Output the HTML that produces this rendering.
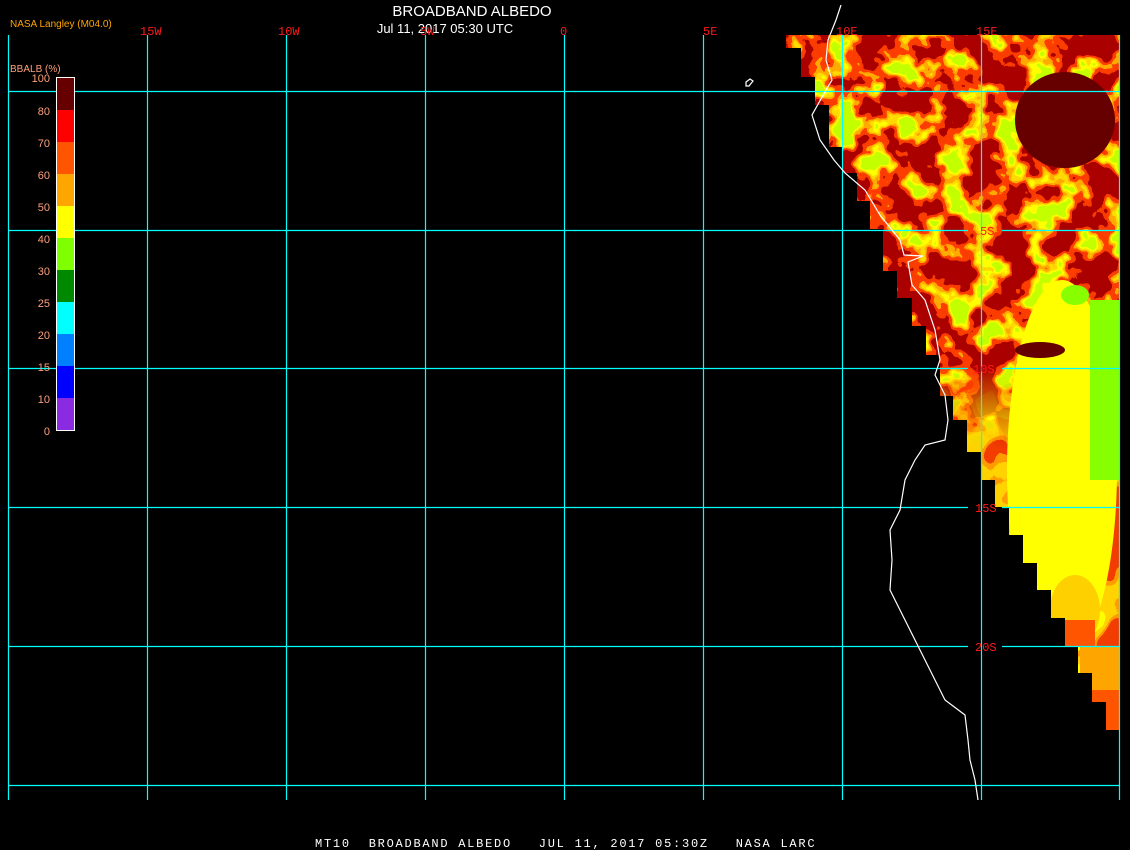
<!DOCTYPE html>
<html><head><meta charset="utf-8"><style>
html,body{margin:0;padding:0;background:#000;width:1130px;height:850px;overflow:hidden}
svg{display:block}
</style></head><body>
<svg width="1130" height="850" xmlns="http://www.w3.org/2000/svg">
<defs>
<clipPath id="d"><path d="M786,35 H1119 V730 H1106 V702 H1092 V673 H1078 V646 H1065 V618 H1051 V590 H1037 V563 H1023 V535 H1009 V507 H995 V480 H981 V452 H967 V420 H953 V396 H940 V355 H926 V326 H912 V298 H897 V271 H883 V229 H870 V201 H857 V173 H843 V147 H829 V105 H815 V77 H801 V48 H786 Z"/></clipPath>
<filter id="n" filterUnits="userSpaceOnUse" x="780" y="30" width="345" height="420">
<feTurbulence type="fractalNoise" baseFrequency="0.035" numOctaves="3" seed="7"/>
<feColorMatrix type="matrix" values="2.4 0 0 0 -0.7  2.4 0 0 0 -0.7  2.4 0 0 0 -0.7  0 0 0 0 1"/>
<feComponentTransfer>
<feFuncR type="discrete" tableValues="0.4 0.4 0.4 0.4 0.95 1 1 1 1 0.55"/>
<feFuncG type="discrete" tableValues="0 0 0 0 0.05 0.05 0.4 0.7 1 1"/>
<feFuncB type="discrete" tableValues="0 0 0 0 0 0 0 0 0 0"/>
</feComponentTransfer>
</filter>
<filter id="s" filterUnits="userSpaceOnUse" x="780" y="250" width="345" height="490">
<feTurbulence type="fractalNoise" baseFrequency="0.03" numOctaves="2" seed="3"/>
<feColorMatrix type="matrix" values="2.6 0 0 0 -0.8  2.6 0 0 0 -0.8  2.6 0 0 0 -0.8  0 0 0 0 1"/>
<feComponentTransfer>
<feFuncR type="discrete" tableValues="0.9 1 1 1 1"/>
<feFuncG type="discrete" tableValues="0.05 0.33 0.65 0.65 1"/>
<feFuncB type="discrete" tableValues="0 0 0 0 0"/>
</feComponentTransfer>
</filter>
<linearGradient id="fd" x1="0" y1="0" x2="0" y2="1"><stop offset="0" stop-color="#fff" stop-opacity="1"/><stop offset="0.8" stop-color="#fff" stop-opacity="1"/><stop offset="1" stop-color="#fff" stop-opacity="0"/></linearGradient>
<mask id="m" maskUnits="userSpaceOnUse" x="780" y="30" width="345" height="420"><rect x="780" y="30" width="345" height="420" fill="url(#fd)"/></mask>
</defs>
<g clip-path="url(#d)">
<rect x="780" y="250" width="345" height="490" filter="url(#s)"/>
<g mask="url(#m)"><path d="M780,30 H1125 V300 Q1040,280 1000,340 Q985,380 990,450 H780Z" filter="url(#n)"/></g>
<ellipse cx="1062" cy="470" rx="55" ry="190" fill="#ffff00"/>
<ellipse cx="1075" cy="610" rx="25" ry="35" fill="#ffd000"/>
<ellipse cx="1065" cy="120" rx="50" ry="48" fill="#660000"/>
<rect x="1090" y="300" width="29" height="180" fill="#88ff00"/>
<ellipse cx="1075" cy="295" rx="14" ry="10" fill="#88ff00"/>
<ellipse cx="1040" cy="350" rx="25" ry="8" fill="#660000"/>
<rect x="1065" y="620" width="30" height="26" fill="#ff5500"/>
<rect x="1080" y="646" width="40" height="44" fill="#ffa500"/>
<rect x="1092" y="690" width="27" height="45" fill="#ff5500"/>
</g>
<g stroke="#00ffff" stroke-width="1.2" fill="none">
<path d="M8.5,35V800M147.5,35V800M286.5,35V800M425.5,35V800M564.5,35V800M703.5,35V800M842.5,35V800M981.5,35V800M1119.5,35V800"/>
<path d="M8,91.5H1120M8,230.5H968M1002,230.5H1120M8,368.5H968M1002,368.5H1120M8,507.5H968M1002,507.5H1120M8,646.5H968M1002,646.5H1120M8,785.5H1120"/>
</g>
<path d="M841,5 L836,20 L828,40 L826,60 L832,80 L826,90 L812,115 L820,140 L834,160 L845,173 L865,190 L880,215 L900,240 L904,255 L923,256 L908,262 L912,285 L925,300 L935,330 L940,360 L935,375 L945,395 L948,420 L945,440 L925,445 L915,460 L905,480 L900,510 L890,530 L892,560 L890,590 L905,620 L920,650 L935,680 L945,700 L965,715 L968,740 L970,760 L975,780 L978,800" stroke="#fff" stroke-width="1.2" fill="none"/>
<path d="M746,82 l4,-3 l3,2 l-4,5 l-3,0z" stroke="#fff" fill="none" stroke-width="1.2"/>
<g font-family="Liberation Sans, sans-serif">
<text x="472" y="16" fill="#fff" font-size="15" text-anchor="middle">BROADBAND ALBEDO</text>
<text x="445" y="33" fill="#fff" font-size="13" text-anchor="middle">Jul 11, 2017 05:30 UTC</text>
<text x="10" y="27" fill="#ffa500" font-size="10">NASA Langley (M04.0)</text>
<text x="10" y="72" fill="#ffa07a" font-size="10">BBALB (%)</text>
</g>
<g font-family="Liberation Mono, monospace" font-size="12" fill="#ff1a1a">
<text x="140" y="35">15W</text><text x="278" y="35">10W</text><text x="420" y="35">5W</text><text x="560" y="35">0</text>
<text x="703" y="35">5E</text><text x="836" y="35">10E</text><text x="976" y="35">15E</text>
<text x="980" y="235">5S</text><text x="973" y="373">10S</text><text x="975" y="512">15S</text><text x="975" y="651">20S</text>
</g>
<g>
<rect x="56" y="77" width="19" height="33" fill="#660000"/>
<rect x="56" y="110" width="19" height="32" fill="#f00"/>
<rect x="56" y="142" width="19" height="32" fill="#ff5500"/>
<rect x="56" y="174" width="19" height="32" fill="#ffa500"/>
<rect x="56" y="206" width="19" height="32" fill="#ffff00"/>
<rect x="56" y="238" width="19" height="32" fill="#80ff00"/>
<rect x="56" y="270" width="19" height="32" fill="#008800"/>
<rect x="56" y="302" width="19" height="32" fill="#00ffff"/>
<rect x="56" y="334" width="19" height="32" fill="#0080ff"/>
<rect x="56" y="366" width="19" height="32" fill="#0000ff"/>
<rect x="56" y="398" width="19" height="32" fill="#8a2be2"/>
<rect x="56.5" y="77.5" width="18" height="353" fill="none" stroke="#fff"/>
</g>
<g font-family="Liberation Sans, sans-serif" font-size="11" fill="#ffa07a" text-anchor="end">
<text x="50" y="82">100</text><text x="50" y="115">80</text><text x="50" y="147">70</text><text x="50" y="179">60</text><text x="50" y="211">50</text><text x="50" y="243">40</text><text x="50" y="275">30</text><text x="50" y="307">25</text><text x="50" y="339">20</text><text x="50" y="371">15</text><text x="50" y="403">10</text><text x="50" y="435">0</text>
</g>
<text x="315" y="847" fill="#fff" font-family="Liberation Mono, monospace" font-size="12" letter-spacing="1.75" xml:space="preserve">MT10  BROADBAND ALBEDO   JUL 11, 2017 05:30Z   NASA LARC</text>
</svg>
</body></html>
